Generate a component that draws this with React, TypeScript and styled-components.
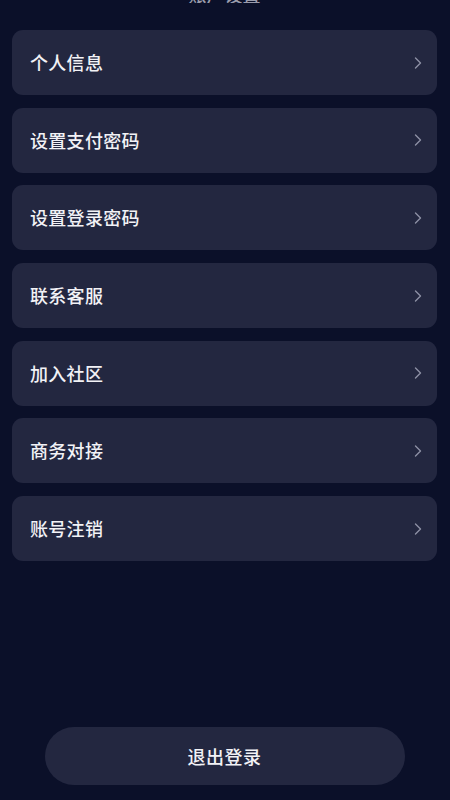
import styled, { createGlobalStyle } from 'styled-components';

const GlobalStyle = createGlobalStyle`
    html, body {
        margin: 0;
        padding: 0;
        background-color: #0b1029;
    }
    body {
        font-family: "Noto Sans CJK SC", "Noto Sans", sans-serif;
    }
`;

const Page = styled.div`
    min-height: 100vh;
    box-sizing: border-box;
    display: flex;
    flex-direction: column;
    padding: 0 13px 15px 12px;
`;

const TitleClip = styled.div`
    height: 3px;
    overflow: hidden;
    display: flex;
    justify-content: center;
    align-items: flex-end;
    margin-bottom: 27px;
`;

const Title = styled.h1`
    margin: 0;
    font-size: 18px;
    line-height: 18px;
    font-weight: 500;
    color: #9a9cab;
`;

const List = styled.div`
    display: flex;
    flex-direction: column;
    gap: 12.7px;
`;

const Row = styled.div`
    height: 65px;
    box-sizing: border-box;
    display: flex;
    align-items: center;
    justify-content: space-between;
    padding: 0 14px 0 18px;
    background-color: #232740;
    border-radius: 11px;
`;

const Label = styled.span`
    color: #f2f2f6;
    font-size: 18px;
    font-weight: 500;
    letter-spacing: 0.3px;
    margin-top: -1px;
`;

const Chevron = () => (
    <svg width='10' height='14' viewBox='0 0 10 14' fill='none'>
        <path d='M2.5 2 L7.5 7 L2.5 12' stroke='#8d90a4' strokeWidth='1.4' strokeLinecap='round' strokeLinejoin='round' />
    </svg>
);

const Footer = styled.div`
    margin-top: auto;
    display: flex;
    justify-content: center;
`;

const LogoutButton = styled.button`
    width: 360px;
    height: 58px;
    border: none;
    border-radius: 29px;
    background-color: #232740;
    color: #f2f2f6;
    font-family: "Noto Sans CJK SC", "Noto Sans", sans-serif;
    font-size: 18px;
    font-weight: 500;
    letter-spacing: 0.5px;
    cursor: pointer;
`;

const items = ['个人信息', '设置支付密码', '设置登录密码', '联系客服', '加入社区', '商务对接', '账号注销'];

export default function App() {
    return (
        <>
            <GlobalStyle />
            <Page>
                <TitleClip>
                    <Title>账户设置</Title>
                </TitleClip>
                <List>
                    {items.map(item => (
                        <Row key={item}>
                            <Label>{item}</Label>
                            <Chevron />
                        </Row>
                    ))}
                </List>
                <Footer>
                    <LogoutButton>退出登录</LogoutButton>
                </Footer>
            </Page>
        </>
    );
}
